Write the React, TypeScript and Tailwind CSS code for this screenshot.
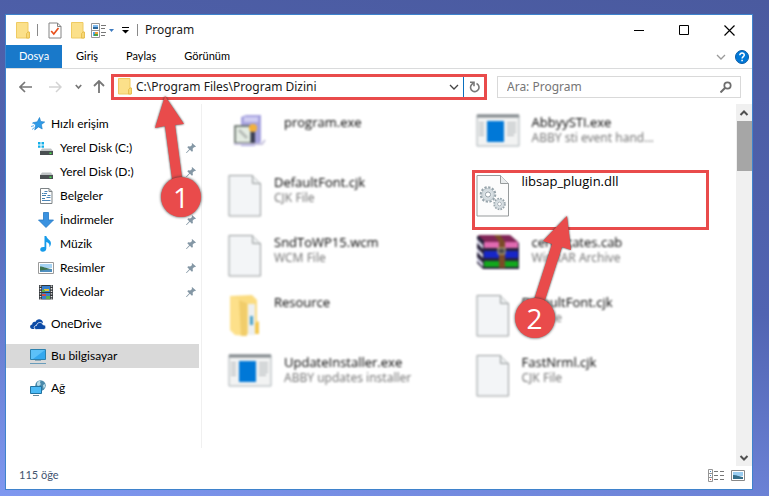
import type { ReactNode } from "react";

type Kind = "setup" | "app" | "doc" | "folder" | "archive" | "dll";

type FileItem = {
  name: string;
  detail?: string;
  kind: Kind;
};

const files: FileItem[] = [
  { name: "program.exe", kind: "setup" },
  { name: "AbbyySTI.exe", detail: "ABBY sti event hand...", kind: "app" },
  { name: "DefaultFont.cjk", detail: "CJK File", kind: "doc" },
  { name: "libsap_plugin.dll", kind: "dll" },
  { name: "SndToWP15.wcm", detail: "WCM File", kind: "doc" },
  { name: "certificates.cab", detail: "WinRAR Archive", kind: "archive" },
  { name: "Resource", kind: "folder" },
  { name: "DefaultFont.cjk", detail: "CJK File", kind: "doc" },
  { name: "UpdateInstaller.exe", detail: "ABBY updates installer", kind: "app" },
  { name: "FastNrml.cjk", detail: "CJK File", kind: "doc" },
];

function Folder() {
  return (
    <svg width="14" height="17" viewBox="0 0 14 17" aria-hidden="true">
      <path d="M0.5 0.5h11.5v9.5h1v6h-12.5z" fill="#fbe08a" stroke="#efcb62" />
      <path d="M10.5 16v-4.500l1.500-1.500h1.500v6z" fill="#f7d774" stroke="#e3b945" strokeWidth=".8" />
    </svg>
  );
}

function CheckDoc() {
  return (
    <svg width="14" height="17" viewBox="0 0 14 17" aria-hidden="true">
      <path d="M1 1h8.500l3.500 3.500v11.500h-12z" fill="#fff" stroke="#848484" />
      <path d="M9.500 1v3.500h3.500" fill="none" stroke="#848484" />
      <path d="M3.200 9l2.600 3 4.700-6" fill="none" stroke="#e8501c" strokeWidth="1.700" />
    </svg>
  );
}

function ViewMenuIcon() {
  return (
    <svg width="24" height="17" viewBox="0 0 24 17" aria-hidden="true">
      <path d="M.5 1.500h8v14h-8zM.5 8.500h8" fill="#fff" stroke="#969696" />
      <path d="M2 3h5v2h-5z" fill="#7db9ef" />
      <path d="M2 5h5v2h-5z" fill="#2c689b" />
      <path d="M2 10h2v4h-2z" fill="#55a7e8" />
      <path d="M4 10h3v2h-3z" fill="#f29c38" />
      <path d="M3 12h4v2h-4z" fill="#4da145" />
      <path d="M10 3.500h5M10 6.500h4M10 10.500h5M10 13.500h4" stroke="#777" />
      <path d="M18 7h5l-2.500 3z" fill="#3e7bc0" />
    </svg>
  );
}

function Star() {
  return (
    <svg width="14" height="14" viewBox="0 0 14 14" aria-hidden="true">
      <path d="M8.500 0.500l1.200 4 4 .5-3.300 2.600.8 4.400-3.700-2.100-3.800 3 1-4.800-2.700-2.400 4.300-.9z" fill="#2f9be8" stroke="#1678c4" strokeWidth=".6" />
      <path d="M0 9.500l3-.8M1 12.500l2.500-2M1 6l2 .5" stroke="#5db2ef" />
    </svg>
  );
}

function Disk({ windows }: { windows?: boolean }) {
  return (
    <svg width="16" height="16" viewBox="0 0 16 16" aria-hidden="true">
      {windows && <path d="M0 2h2.500v2.500h-2.500zM3.500 2h2.500v2.500h-2.500zM0 5.500h2.500v2.300h-2.500zM3.500 5.500h2.500v2.300h-2.500z" fill="#14afe9" />}
      <path d="M4 8.500h9l2 2.500h-13z" fill="#bfc3c5" />
      <path d="M2 11h13v4h-13z" fill="#4a4f52" />
      <path d="M11.500 12.500h2v1.500h-2z" fill="#49e34d" />
    </svg>
  );
}

function DocumentIcon() {
  return (
    <svg width="16" height="16" viewBox="0 0 16 16" aria-hidden="true">
      <path d="M2.500 .5h8.500l3 3v12h-11.500z" fill="#fff" stroke="#7d8386" />
      <path d="M11 .5v3h3" fill="none" stroke="#7d8386" />
      <path d="M6.500 3.500h3M6 5.500h3M9.500 7.500h3M8.500 9.500h4M4 12.500h8.500" stroke="#4b86b8" />
      <path d="M4 5.500h1.500M4 7.500h4M4 10.500h3" stroke="#3d7eae" />
    </svg>
  );
}

function Download() {
  return (
    <svg width="16" height="16" viewBox="0 0 16 16" aria-hidden="true">
      <path d="M5.500 .5h5v7.500h5l-7.500 7.500-7.500-7.500h5z" fill="#3a92e0" stroke="#2379c4" strokeWidth=".8" />
    </svg>
  );
}

function Music() {
  return (
    <svg width="16" height="16" viewBox="0 0 16 16" aria-hidden="true">
      <path d="M6.500 0h1.800c.3 3 5 3.800 4.600 7.800-.1 1.400-.8 2.600-1.700 3.400.9-3-.7-4.800-2.900-5.300v6.600c0 4-6.100 4.300-6.100 1 0-2.400 2.500-3 4.300-2.400z" fill="#169bea" />
    </svg>
  );
}

function Picture() {
  return (
    <svg width="16" height="16" viewBox="0 0 16 16" aria-hidden="true">
      <path d="M.5 2.500h15v11h-15z" fill="#fff" stroke="#9a9a9a" />
      <path d="M2 4h12v4h-12z" fill="#a6d3f3" />
      <path d="M2 9h12v3h-12z" fill="#4f8fc0" />
      <path d="M2 6.500c3 0 5 1.700 12 2.500l-12 1.500z" fill="#3d7350" />
    </svg>
  );
}

function Video() {
  return (
    <svg width="16" height="16" viewBox="0 0 16 16" aria-hidden="true">
      <path d="M1 1h14v14.500h-14z" fill="#33373b" />
      <path d="M2.500 1.500v14M13.500 1.500v14" stroke="#e8e8e8" strokeWidth="1.500" strokeDasharray="1.300 1.300" />
      <path d="M4 2h8v6h-8zM4 9h8v6h-8z" fill="#3880cf" />
      <path d="M6 5h5v2h-5z" fill="#e5c531" />
      <path d="M4 10h4v2h-4z" fill="#cf4b4b" />
      <path d="M8 12h4v3h-4zM4 6h3v2h-3z" fill="#5fae49" />
    </svg>
  );
}

function Cloud() {
  return (
    <svg width="16" height="16" viewBox="0 0 16 16" aria-hidden="true">
      <path d="M4 13h-1.500c-3-.3-3.300-4-.3-4.600 0-2 1.700-3 3.200-2.500 1.400-3.600 6.600-3.400 7.600.6" fill="#0c4ba6" />
      <path d="M6.500 13.500c-3.200-.2-2.900-4 0-4 .5-3.700 5.500-4 6.500-.8 3.300-.2 4 4.500.5 4.800z" fill="#0c4ba6" stroke="#fff" strokeWidth=".8" />
    </svg>
  );
}

function Computer() {
  return (
    <svg width="16" height="16" viewBox="0 0 16 16" aria-hidden="true">
      <path d="M.5 1.500h15v10h-15z" fill="#5cc1f8" stroke="#2c81ae" />
      <path d="M15 2v9h-12z" fill="#35a8ee" />
      <path d="M5 12.500h6" stroke="#8aa9b9" />
      <path d="M0 15.500h16" stroke="#699cba" />
    </svg>
  );
}

function Network() {
  return (
    <svg width="16" height="16" viewBox="0 0 16 16" aria-hidden="true">
      <circle cx="10.500" cy="5.500" r="5.200" fill="#4a8aab" />
      <path d="M7 3c1-2 3-2.500 3.500-2l-.5 2 1 1-2 2-2-.5zM13 5l2-1v3l-1.500 1.500z" fill="#b8dbe7" />
      <path d="M.5 6.500h11v7h-11z" fill="#4bbaf6" stroke="#2273a0" />
      <path d="M3 15.500h6" stroke="#65889b" />
    </svg>
  );
}

function Pin() {
  return (
    <svg width="10" height="10" viewBox="0 0 10 10" aria-hidden="true">
      <path d="M6 0l4 3.500-1.200.7-.6-.2-1.600 1.800.3 2.200-1 .8-2-2-3.200 3.200-.7.2.2-.8 3-3.200-1.900-2 .9-.9 2 .3 1.900-1.700-.4-.8z" fill="#8497a5" />
    </svg>
  );
}

function Gear({ x, y, scale }: { x: number; y: number; scale: number }) {
  return (
    <g transform={`translate(${x} ${y}) scale(${scale})`}>
      <circle r="7" fill="none" stroke="#97a4ab" strokeWidth="2.600" strokeDasharray="2.200 1.460" />
      <circle r="5" fill="#e6ebee" stroke="#d5dde1" strokeWidth="2.600" />
      <circle r="6.200" fill="none" stroke="#aab4ba" strokeWidth=".6" />
      <circle r="2.600" fill="#fff" stroke="#87949c" strokeWidth=".9" />
    </g>
  );
}

function FileIcon({ kind }: { kind: Kind }) {
  if (kind === "doc" || kind === "dll") {
    return (
      <svg width="34" height="44" viewBox="0 0 34 44" aria-hidden="true">
        <path d="M1 1.500h23.500l8 8v32.500h-31.500z" fill={kind === "doc" ? "#f3f5f7" : "#fcfcfc"} stroke="#979b9c" />
        <path d="M24.500 1.500v8h8" fill="#e9eced" stroke="#979b9c" />
        {kind === "dll" && (
          <>
            <Gear x={12} y={20.5} scale={1} />
            <Gear x={23.5} y={30} scale={0.75} />
          </>
        )}
      </svg>
    );
  }
  if (kind === "folder") {
    return (
      <svg width="34" height="44" viewBox="0 0 34 44" aria-hidden="true">
        <path d="M2 2l22-1 5 5v34h-22l-5-5z" fill="#fbdc80" />
        <path d="M2 2l17 6v34l-12-1-5-5z" fill="#fde08a" />
        <path d="M11 6l8 3v33h-6z" fill="#f1cd6b" />
        <path d="M20 10h7v31h-7z" fill="#edf0f1" />
        <path d="M22 22h3v9h-3z" fill="#4ba2c9" />
        <path d="M27 29l4-2v13h-4z" fill="#f4c84f" />
      </svg>
    );
  }
  if (kind === "archive") {
    return (
      <svg width="44" height="36" viewBox="0 0 44 36" aria-hidden="true">
        <path d="M1 2h34l8 7v26h-36l-6-6z" fill="#29223b" />
        <path d="M2 1h32l8 7h-33z" fill="#812557" />
        <path d="M8 8h34v6h-34z" fill="#e06ab0" />
        <path d="M8 17h34v7h-34z" fill="#1726c8" />
        <path d="M8 27h34v6h-34z" fill="#12a81d" />
        <path d="M1 5l6 6v4l-6-6zM1 14l6 6v4l-6-6zM1 23l6 6v4l-6-6z" fill="#d8d8ea" />
        <path d="M18 1h6l5 7v26h-6v-26z" fill="#7a4b27" />
        <path d="M22 14h7v6h-7z" fill="#4b4b4b" stroke="#c7b784" />
      </svg>
    );
  }
  if (kind === "app") {
    return (
      <svg width="44" height="34" viewBox="0 0 44 34" aria-hidden="true">
        <path d="M1 1h42v31h-42z" fill="#f2f3f3" stroke="#a9b1b5" />
        <path d="M1 .5h42v3h-42z" fill="#83898d" />
        <path d="M11 7h17v21h-17z" fill="#0078d7" />
        <path d="M3 9h5M3 12h5M3 15h5M3 18h5M3 21h5M31 9h9M31 12h9M31 15h9M31 18h9M31 21h7" stroke="#b9bdc0" strokeWidth="1.500" />
      </svg>
    );
  }
  return (
    <svg width="44" height="34" viewBox="0 0 44 34" aria-hidden="true">
      <path d="M13 3l5-2h15v27l-7 4h-13z" fill="#a7a3df" />
      <path d="M16 3h14v5h-14z" fill="#cfcdf2" />
      <path d="M7 12h16v17h-16z" fill="#e4ece3" stroke="#56605a" strokeWidth="1.500" />
      <path d="M11 16l8 8" stroke="#b7bbb7" strokeWidth="3" />
      <circle cx="25" cy="14" r="4" fill="#f3b13c" />
      <path d="M23 18h4v13h-4z" fill="#3c3f55" />
      <path d="M6 30h28l3-4" fill="none" stroke="#c5c1dc" strokeWidth="2" />
    </svg>
  );
}

function SideItem({ icon, label, pinned, nested, active }: { icon: ReactNode; label: string; pinned?: boolean; nested?: boolean; active?: boolean }) {
  return (
    <li className="mr-[2px]">
      <a
        href="#"
        className={`flex h-6 items-center pr-[3px] ${nested ? "gap-1.5 pl-8" : "gap-[5px] pl-6"} ${active ? "bg-[#d9d9d9]" : ""}`}
      >
        <span className="flex w-4 justify-center">{icon}</span>
        <span className="flex-1 whitespace-nowrap">{label}</span>
        {pinned && <Pin />}
      </a>
    </li>
  );
}

function StepBadge({ children }: { children: ReactNode }) {
  return (
    <span className="flex size-10 items-center justify-center rounded-full bg-[#e94b4b] text-[28px] leading-none font-medium text-white shadow-[0_0_3px_#333]">
      {children}
    </span>
  );
}

function FileTile({ file }: { file: FileItem }) {
  const target = file.kind === "dll";

  return (
    <li className={`relative flex h-[60px] gap-3 ${target ? "z-10 border-3 border-[#e94b4b] px-px" : "px-1 pt-1 blur-[1px]"}`}>
      <span className={target ? "shrink-0 pt-px" : "shrink-0"}>
        <FileIcon kind={file.kind} />
      </span>
      <span className="min-w-0 leading-4 whitespace-nowrap">
        <span className="block text-[13px] text-black">{file.name}</span>
        {file.detail && <span className="block font-['Noto_Sans',sans-serif] text-[12px] text-[#777]">{file.detail}</span>}
      </span>
      {target && (
        <div className="absolute top-[42px] left-10">
          <svg width="64" height="96" viewBox="0 0 64 96" className="drop-shadow-[0_0_1px_#333]" aria-hidden="true">
            <path d="M52 1l4 34-9-3-18 56-10-3 18-56-9-3z" fill="#e94b4b" />
          </svg>
          <div className="absolute top-[83px] left-0">
            <StepBadge>2</StepBadge>
          </div>
        </div>
      )}
    </li>
  );
}

function Chevron({ className }: { className: string }) {
  return (
    <svg width="10" height="8" viewBox="0 0 10 8" className={className} fill="none" stroke="currentColor" aria-hidden="true">
      <path d="M1 2l4 4 4-4" strokeWidth="1.300" />
    </svg>
  );
}

export default function App() {
  return (
    <div className="flex min-h-screen bg-[linear-gradient(190deg,#4a5a9f,#5164b2_50%,#7f98f0)] pt-[14px] pr-4 pb-1.5 pl-[5px] font-['Open_Sans','Noto_Sans',sans-serif] text-[12px] text-[#1a1a1a]">
      <main className="relative flex min-w-0 flex-1 flex-col border border-[#3f83cc] bg-white">
        <header className="flex h-[30px] items-center pl-2.5">
          <Folder />
          <span className="ml-[7px] h-3 w-px bg-[#8a8a8a]" />
          <button type="button" aria-label="Özellikler" className="ml-2.5">
            <CheckDoc />
          </button>
          <button type="button" aria-label="Yeni klasör" className="ml-[9px]">
            <Folder />
          </button>
          <button type="button" aria-label="Görünüm seçenekleri" className="ml-1.5">
            <ViewMenuIcon />
          </button>
          <button type="button" aria-label="Hızlı Erişim Araç Çubuğu" className="ml-1.5">
            <svg width="9" height="10" viewBox="0 0 9 10" aria-hidden="true">
              <path d="M1 2.500h7" stroke="#000" />
              <path d="M1 5h7l-3.500 3.500z" />
            </svg>
          </button>
          <span className="ml-[7px] h-3 w-px bg-[#8a8a8a]" />
          <h1 className="ml-[7px] flex-1 font-['Noto_Sans',sans-serif] text-[12px]">Program</h1>
          <button type="button" aria-label="Simge durumuna küçült" className="flex h-full w-[45px] items-center justify-center">
            <svg width="11" height="11" aria-hidden="true">
              <path d="M0 5.500h10" stroke="#000" />
            </svg>
          </button>
          <button type="button" aria-label="Ekranı kapla" className="flex h-full w-[45px] items-center justify-center">
            <svg width="11" height="11" aria-hidden="true">
              <path d="M.5 .5h9v9h-9z" fill="none" stroke="#000" />
            </svg>
          </button>
          <button type="button" aria-label="Kapat" className="flex h-full w-[45px] items-center justify-center">
            <svg width="11" height="11" aria-hidden="true">
              <path d="M.5 .5l10 10M10.500 .5l-10 10" stroke="#000" strokeWidth="1.200" />
            </svg>
          </button>
        </header>

        <nav className="flex h-6 items-stretch border-b border-[#dadbdc] font-[Lato,sans-serif] text-[11px] text-black">
          <button type="button" className="w-14 bg-[#1979ca] text-white">
            Dosya
          </button>
          <button type="button" className="px-[14px]">Giriş</button>
          <button type="button" className="px-[14px]">Paylaş</button>
          <button type="button" className="px-[14px]">Görünüm</button>
          <button type="button" aria-label="Şeridi genişlet" className="ml-auto px-2">
            <Chevron className="text-[#9a9a9a]" />
          </button>
          <button type="button" aria-label="Yardım" className="pr-[3px] pl-px">
            <svg width="14" height="14" viewBox="0 0 14 14" aria-hidden="true">
              <circle cx="7" cy="7" r="6.500" fill="#0078d7" stroke="#0a5ba5" />
              <path d="M4.800 5.200c0-3 4.600-2.600 4.500-.1 0 1.500-2.200 1.700-2.200 3.500" fill="none" stroke="#fff" strokeWidth="1.500" />
              <path d="M6.300 9.800h1.600v1.500h-1.600z" fill="#fff" />
            </svg>
          </button>
        </nav>

        <div className="flex h-[35px] items-center pr-[11px] font-['Noto_Sans',sans-serif]">
          <div className="flex w-[105px] items-center pl-[13px] text-[#777]">
            <button type="button" aria-label="Geri">
              <svg width="13" height="12" viewBox="0 0 13 12" fill="none" stroke="currentColor" strokeWidth="1.700" aria-hidden="true">
                <path d="M6 1l-5 5 5 5M1 6h12" />
              </svg>
            </button>
            <button type="button" aria-label="İleri" className="ml-[17px] text-[#d3d3d3]">
              <svg width="13" height="12" viewBox="0 0 13 12" fill="none" stroke="currentColor" strokeWidth="1.500" aria-hidden="true">
                <path d="M7 1l5 5-5 5M0 6h12" />
              </svg>
            </button>
            <button type="button" aria-label="Son konumlar" className="ml-[13px]">
              <svg width="7" height="6" viewBox="0 0 7 6" fill="none" stroke="currentColor" strokeWidth="1.700" aria-hidden="true">
                <path d="M.8 1l2.700 3 2.700-3" />
              </svg>
            </button>
            <button type="button" aria-label="Yukarı" className="ml-[11px]">
              <svg width="12" height="13" viewBox="0 0 12 13" fill="none" stroke="currentColor" strokeWidth="1.800" aria-hidden="true">
                <path d="M1 6l5-5 5 5M6 1v12" />
              </svg>
            </button>
          </div>
          <div className="flex h-[26px] min-w-0 flex-1 items-center border-3 border-[#e94b4b] pl-1">
            <Folder />
            <input
              type="text"
              aria-label="Adres"
              defaultValue="C:\Program Files\Program Dizini"
              className="ml-1 min-w-0 flex-1 outline-none"
            />
            <button type="button" aria-label="Önceki konumlar" className="px-1">
              <Chevron className="text-[#444]" />
            </button>
            <button type="button" aria-label="Yenile" className="flex h-full w-[21px] items-center justify-center border-l border-[#0a6fbe]">
              <svg width="11" height="12" viewBox="0 0 11 12" fill="none" stroke="#777" strokeWidth="1.600" aria-hidden="true">
                <path d="M7.500 2.600a4.200 4.200 0 1 1-5 1.200l2-2.200" />
                <path d="M1 1.300h4v4" />
              </svg>
            </button>
          </div>
          <div className="ml-2.5 flex h-[22px] w-[244px] items-center border border-[#d9d9d9] pr-2 pl-[9px]">
            <input
              type="search"
              aria-label="Ara"
              placeholder="Ara: Program"
              className="min-w-0 flex-1 outline-none placeholder:text-[#767676]"
            />
            <svg width="12" height="12" viewBox="0 0 12 12" fill="none" stroke="#6d6d6d" aria-hidden="true">
              <circle cx="7.500" cy="4.500" r="3.200" strokeWidth="1.700" />
              <path d="M5 7l-4.500 4.500" strokeWidth="2" />
            </svg>
          </div>
        </div>

        <div className="flex flex-1">
          <aside className="mb-[18px] w-[196px] shrink-0 border-r border-[#f0f0f0] pt-2 font-[Lato,sans-serif] text-[12px] text-black">
            <ul>
              <SideItem icon={<Star />} label="Hızlı erişim" />
              <SideItem nested pinned icon={<Disk windows />} label="Yerel Disk (C:)" />
              <SideItem nested pinned icon={<Disk />} label="Yerel Disk (D:)" />
              <SideItem nested icon={<DocumentIcon />} label="Belgeler" />
              <SideItem nested pinned icon={<Download />} label="İndirmeler" />
              <SideItem nested pinned icon={<Music />} label="Müzik" />
              <SideItem nested pinned icon={<Picture />} label="Resimler" />
              <SideItem nested pinned icon={<Video />} label="Videolar" />
            </ul>
            <ul className="mt-2 space-y-2">
              <SideItem icon={<Cloud />} label="OneDrive" />
              <SideItem active icon={<Computer />} label="Bu bilgisayar" />
              <SideItem icon={<Network />} label="Ağ" />
            </ul>
          </aside>

          <ul className="grid min-w-0 flex-1 grid-cols-2 content-start gap-x-2.5 pt-1.5 pr-[27px] pl-[22px]">
            {files.map((file, i) => (
              <FileTile key={i} file={file} />
            ))}
          </ul>

          <div className="flex w-4 flex-col items-center bg-[#f0f0f0] text-[#505050]" aria-hidden="true">
            <span className="flex h-[17px] items-center">
              <svg width="10" height="8" viewBox="0 0 10 8" fill="none" stroke="currentColor" strokeWidth="2">
                <path d="M1.500 6l3.500-3.500 3.500 3.500" />
              </svg>
            </span>
            <span className="h-[50px] w-[15px] bg-[#a6a6a6]" />
            <span className="mt-auto flex h-[17px] items-center">
              <svg width="10" height="8" viewBox="0 0 10 8" fill="none" stroke="currentColor" strokeWidth="2">
                <path d="M1.500 2l3.500 3.500 3.500-3.500" />
              </svg>
            </span>
          </div>
        </div>

        <footer className="flex h-[23px] items-center pr-[7px] pb-1 pl-[13px] text-[#42546f]">
          <span className="flex-1 font-[Lato,sans-serif] text-[11px]">115 öğe</span>
          <button type="button" aria-label="Ayrıntılar">
            <svg width="17" height="14" viewBox="0 0 17 14" aria-hidden="true">
              <path d="M.5 .5h4v12h-4zM.5 4.500h4M.5 8.500h4" fill="#fff" stroke="#959595" />
              <path d="M2 2h1v1h-1zM2 6h1v1h-1z" fill="#4681b8" />
              <path d="M2 10h1v1h-1z" fill="#e33" />
              <path d="M6 2.500h4M12 2.500h4M6 6.500h4M12 6.500h4M6 10.500h4M12 10.500h4" stroke="#777" />
            </svg>
          </button>
          <button type="button" aria-label="Büyük simgeler" className="ml-1.5">
            <svg width="14" height="12" viewBox="0 0 14 12" aria-hidden="true">
              <path d="M.5 .5h13v10h-13z" fill="#fff" stroke="#888" />
              <path d="M2 2h10v4h-10z" fill="#9acdf1" />
              <path d="M2 5c3 0 5 1 10 2v2h-10z" fill="#356e8a" />
            </svg>
          </button>
        </footer>

        <div className="absolute top-[80px] left-[148px] z-10">
          <svg width="40" height="92" viewBox="0 0 40 92" className="drop-shadow-[0_0_1px_#333]" aria-hidden="true">
            <path d="M11 1l19 28-9 1 8 60-10 1-8-60-10 2z" fill="#e94b4b" />
          </svg>
          <div className="absolute top-[82px] left-[7px]">
            <StepBadge>1</StepBadge>
          </div>
        </div>
      </main>
    </div>
  );
}
